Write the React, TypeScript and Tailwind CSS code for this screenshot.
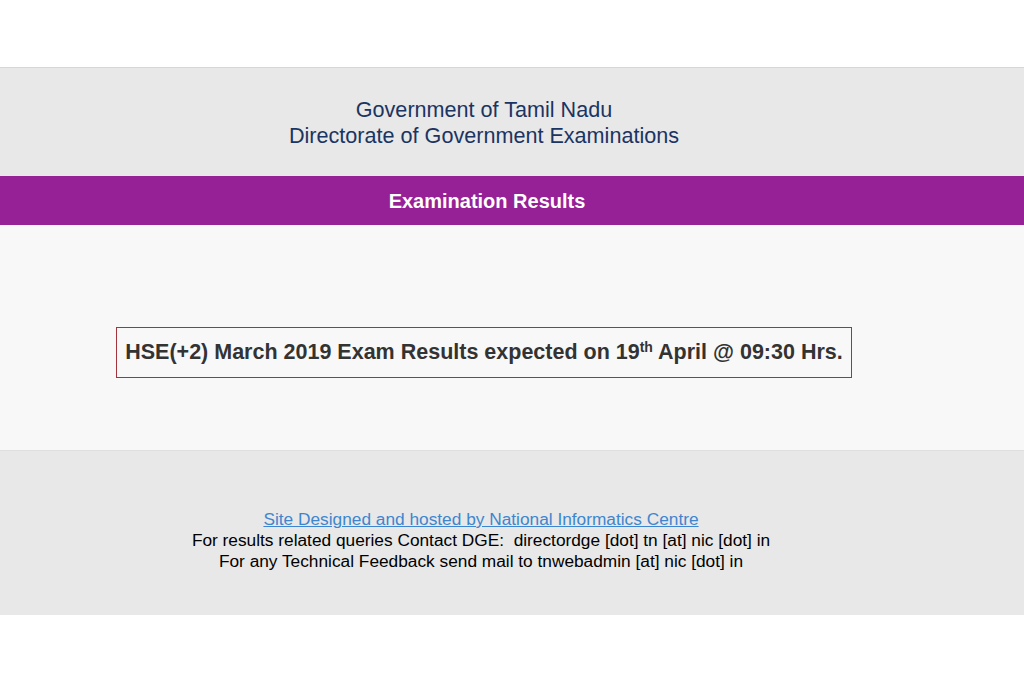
export default function App() {
  return (
    <div className="min-h-[683px] w-full bg-white font-['Liberation_Sans',Arial,sans-serif]">
      <div className="h-[67px]" />
      <header className="flex h-[109px] flex-col items-center justify-center border-t border-[#d6d6d6] bg-[#e8e8e8] pr-[56px] pt-[2px] text-[21.6px] leading-[26px] text-[#1b3462]">
        <div>Government of Tamil Nadu</div>
        <div>Directorate of Government Examinations</div>
      </header>
      <div className="flex h-[49px] items-center justify-center bg-[#962096] pr-[50px] text-[20px] font-bold text-white">
        Examination Results
      </div>
      <main className="flex h-[225px] items-start justify-center bg-[#f8f8f8] pr-[56px] pt-[102px]">
        <div className="flex h-[51px] w-[736px] items-center justify-center border border-[#a3343b] text-[21.5px] font-bold text-[#333]">
          <span>
            HSE(+2) March 2019 Exam Results expected on 19<sup className="text-[14px]">th</sup> April @ 09:30 Hrs.
          </span>
        </div>
      </main>
      <footer className="flex h-[165px] flex-col items-center justify-start border-t border-[#dedede] bg-[#e8e8e8] pr-[62px] pt-[58px] text-[17.3px] leading-[21px] text-black">
        <a href="#" className="text-[#3d86cf] underline">
          Site Designed and hosted by National Informatics Centre
        </a>
        <div className="whitespace-pre">For results related queries Contact DGE:  directordge [dot] tn [at] nic [dot] in</div>
        <div>For any Technical Feedback send mail to tnwebadmin [at] nic [dot] in</div>
      </footer>
    </div>
  );
}
